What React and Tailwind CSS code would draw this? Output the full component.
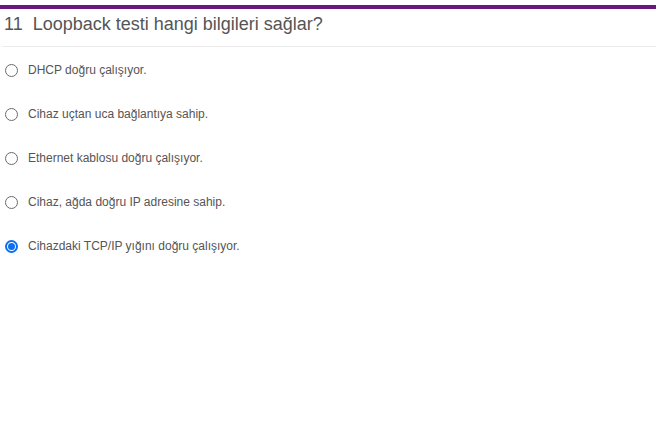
const options = [
  { text: 'DHCP doğru çalışıyor.', checked: false },
  { text: 'Cihaz uçtan uca bağlantıya sahip.', checked: false },
  { text: 'Ethernet kablosu doğru çalışıyor.', checked: false },
  { text: 'Cihaz, ağda doğru IP adresine sahip.', checked: false },
  { text: 'Cihazdaki TCP/IP yığını doğru çalışıyor.', checked: true },
];

function Radio({ checked }) {
  return checked ? (
    <span className="flex h-[13px] w-[13px] items-center justify-center rounded-full border-2 border-[#0b6ff2] bg-white">
      <span className="h-[7px] w-[7px] rounded-full bg-[#0b6ff2]" />
    </span>
  ) : (
    <span className="h-[13px] w-[13px] rounded-full border border-[#6b6b6b] bg-white" />
  );
}

export default function App() {
  return (
    <div className="min-h-[437px] w-[656px] bg-white pt-[5px] font-['Liberation_Sans',Arial,sans-serif]">
      <div className="h-[4px] bg-[#68197e]" />
      <div className="ml-[2px] border-b border-[#ececec] pb-[12px] pt-[5px]">
        <h2 className="pl-[2px] text-[18px] leading-[20px] text-[#555]">
          11&nbsp;&nbsp;Loopback testi hangi bilgileri sağlar?
        </h2>
      </div>
      <div className="mt-[16px] flex flex-col gap-[30px] pl-[5px]">
        {options.map(o => (
          <label key={o.text} className="flex h-[14px] items-center gap-[10px]">
            <Radio checked={o.checked} />
            <span className="text-[12px] leading-[14px] text-[#555]">{o.text}</span>
          </label>
        ))}
      </div>
    </div>
  );
}
